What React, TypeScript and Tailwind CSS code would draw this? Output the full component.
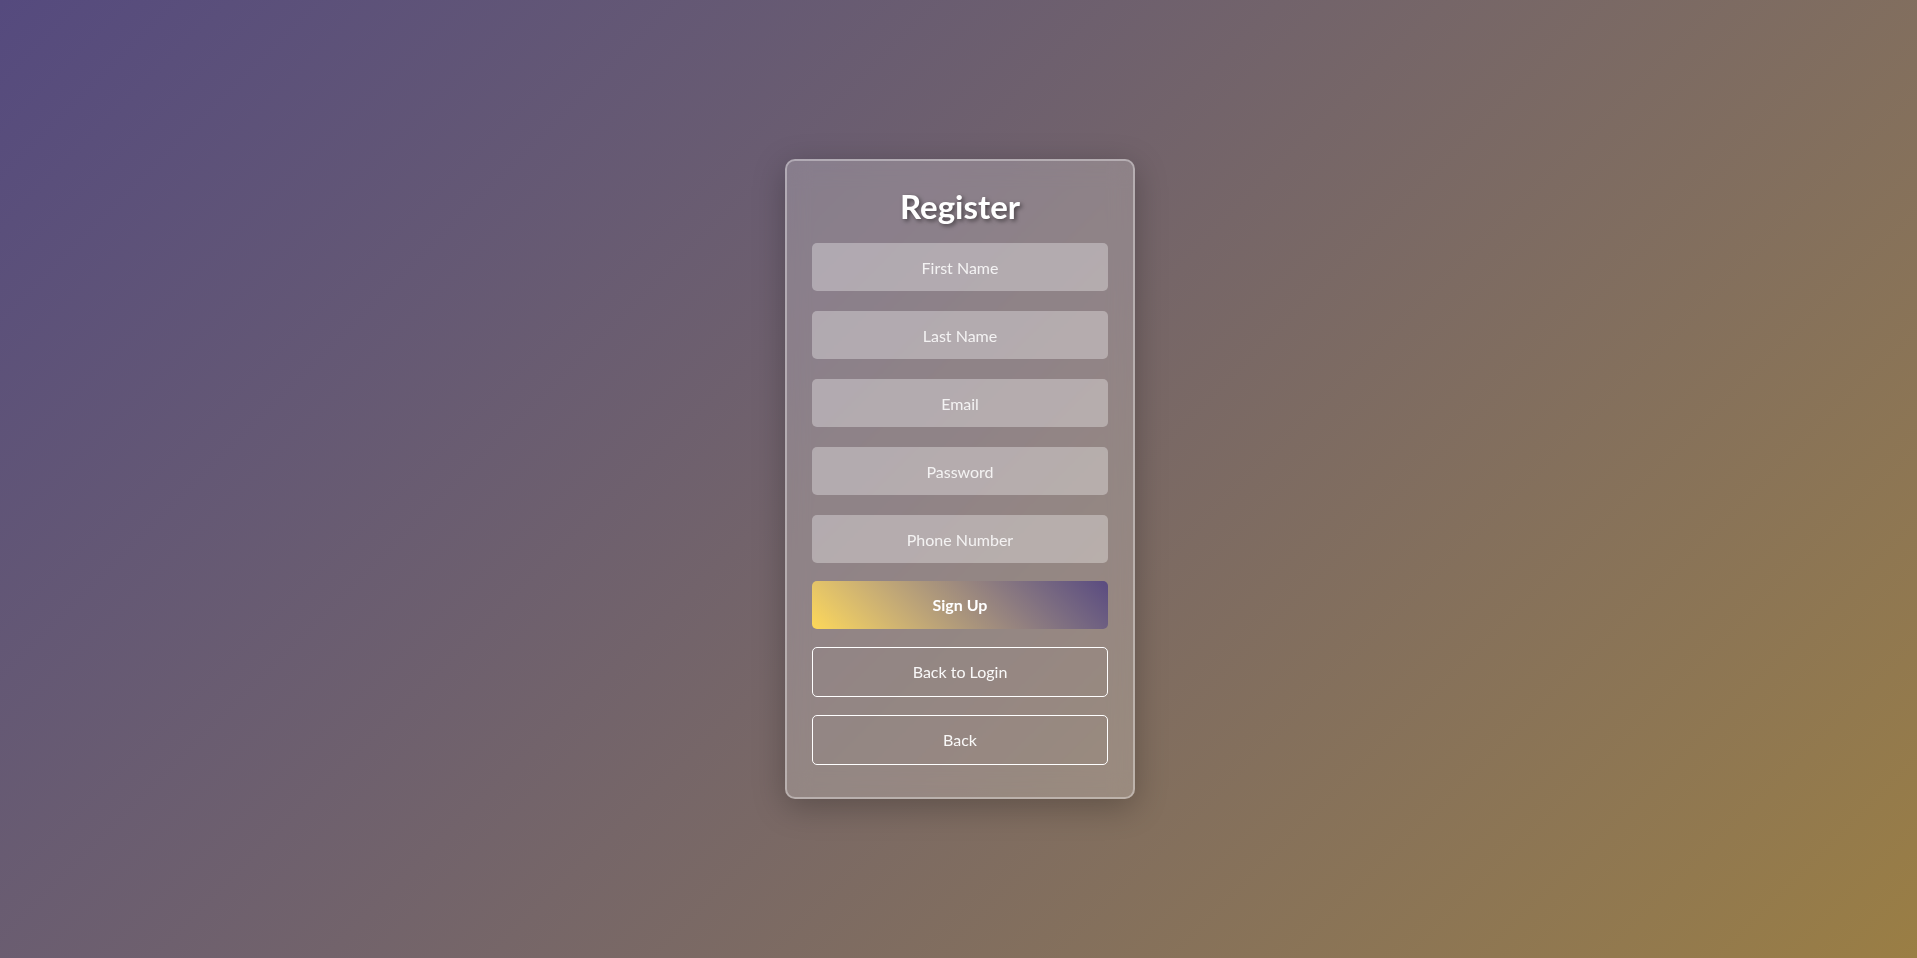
import { useState } from "react";

const fields = [
  { name: "firstName", placeholder: "First Name", type: "text" },
  { name: "lastName", placeholder: "Last Name", type: "text" },
  { name: "email", placeholder: "Email", type: "email" },
  { name: "password", placeholder: "Password", type: "password" },
  { name: "phone", placeholder: "Phone Number", type: "tel" },
];

export default function App() {
  const [form, setForm] = useState<Record<string, string>>({});

  const handleChange = (e: any) => {
    const { name, value } = e.target;
    setForm((prev) => ({ ...prev, [name]: value }));
  };

  return (
    <main className="min-h-screen w-full flex items-center justify-center bg-linear-135 from-[#554a7e] to-[#9a7e44] font-['Lato',sans-serif]">
      {/* Register card */}
      <div className="ml-[3px] w-[350px] flex flex-col border-2 border-white/35 rounded-[10px] bg-white/20 backdrop-blur-md shadow-[0_8px_32px_rgba(0,0,0,0.25)] px-[25px] pt-[25px] pb-8">
        <h2 className="text-center text-white font-bold text-[33px] leading-[40px] mb-[17px] [text-shadow:2px_2px_4px_rgba(0,0,0,0.5)]">
          Register
        </h2>

        <div className="flex flex-col gap-5">
          {fields.map((f) => (
            <input
              key={f.name}
              name={f.name}
              type={f.type}
              value={form[f.name] || ""}
              onChange={handleChange}
              placeholder={f.placeholder}
              className="h-12 w-full rounded-[5px] bg-white/[0.33] text-center text-white text-base placeholder:text-white/85 outline-none"
            />
          ))}
        </div>

        <button className="mt-[18px] h-12 w-full rounded-[5px] bg-linear-45 from-[#fdd858] to-[#5a4b80] text-white font-bold text-base">
          Sign Up
        </button>
        <button className="mt-[18px] h-[50px] w-full rounded-[5px] border border-white text-white/95 text-base">
          Back to Login
        </button>
        <button className="mt-[18px] h-[50px] w-full rounded-[5px] border border-white text-white/95 text-base">
          Back
        </button>
      </div>
    </main>
  );
}
